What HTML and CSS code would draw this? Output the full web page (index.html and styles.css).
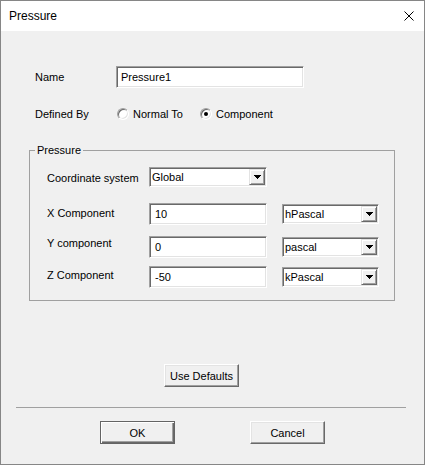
FILE: index.html
```html
<!DOCTYPE html>
<html lang="en">
<head>
<meta charset="utf-8">
<title>Pressure</title>
<link rel="stylesheet" href="styles.css">
</head>
<body>
<div class="window">
  <div class="titlebar">
    <span class="title">Pressure</span>
    <svg class="close" width="10" height="10" viewBox="0 0 10 10" aria-label="Close">
      <path d="M0.5 0.5 L9.5 9.5 M9.5 0.5 L0.5 9.5" stroke="#000" stroke-width="1" fill="none"/>
    </svg>
  </div>

  <div class="client">
    <div class="form-row name-row">
      <span class="label">Name</span>
      <div class="edit name-edit">Pressure1</div>
    </div>

    <div class="form-row defined-row">
      <span class="label">Defined By</span>
      <div class="radios">
        <span class="radio radio-normal"><span class="radio-box"></span>Normal To</span>
        <span class="radio radio-component"><span class="radio-box checked"></span>Component</span>
      </div>
    </div>

    <fieldset class="group">
      <legend>Pressure</legend>
      <div class="group-body">
        <div class="grow row-coord">
          <span class="label">Coordinate system</span>
          <div class="combo wide">
            <span class="combo-text">Global</span>
            <span class="combo-btn"><svg width="7" height="4" viewBox="0 0 7 4"><path d="M0 0h7v1h-1v1h-1v1h-1v1h-1v-1h-1v-1h-1v-1h-1z" fill="#000"/></svg></span>
          </div>
        </div>

        <div class="grow row-x">
          <span class="label">X Component</span>
          <div class="edit field">10</div>
          <div class="combo unit">
            <span class="combo-text">hPascal</span>
            <span class="combo-btn"><svg width="7" height="4" viewBox="0 0 7 4"><path d="M0 0h7v1h-1v1h-1v1h-1v1h-1v-1h-1v-1h-1v-1h-1z" fill="#000"/></svg></span>
          </div>
        </div>

        <div class="grow row-y">
          <span class="label">Y component</span>
          <div class="edit field">0</div>
          <div class="combo unit">
            <span class="combo-text">pascal</span>
            <span class="combo-btn"><svg width="7" height="4" viewBox="0 0 7 4"><path d="M0 0h7v1h-1v1h-1v1h-1v1h-1v-1h-1v-1h-1v-1h-1z" fill="#000"/></svg></span>
          </div>
        </div>

        <div class="grow row-z">
          <span class="label">Z Component</span>
          <div class="edit field">-50</div>
          <div class="combo unit">
            <span class="combo-text">kPascal</span>
            <span class="combo-btn"><svg width="7" height="4" viewBox="0 0 7 4"><path d="M0 0h7v1h-1v1h-1v1h-1v1h-1v-1h-1v-1h-1v-1h-1z" fill="#000"/></svg></span>
          </div>
        </div>
      </div>
    </fieldset>

    <div class="defaults-row">
      <button class="btn" type="button">Use Defaults</button>
    </div>

    <div class="separator"></div>

    <div class="actions">
      <button class="btn btn-default" type="button">OK</button>
      <button class="btn" type="button">Cancel</button>
    </div>
  </div>
</div>
</body>
</html>
```

FILE: styles.css
```css
* {
  box-sizing: border-box;
}

html,
body {
  margin: 0;
  padding: 0;
}

body {
  width: 425px;
  height: 465px;
  background: #f0f0f0;
  color: #000;
  font-family: "Liberation Sans", Arial, sans-serif;
  font-size: 11px;
}

/* dialog frame */
.window {
  width: 425px;
  height: 465px;
  border: 1px solid #868686;
  background: #f0f0f0;
  display: flex;
  flex-direction: column;
}

.titlebar {
  flex: none;
  height: 30px;
  background: #fff;
  display: flex;
  align-items: center;
  justify-content: space-between;
  padding: 0 10px 0 8px;
}

.title {
  font-size: 12px;
  line-height: 30px;
}

.close {
  display: block;
}

.client {
  flex: 1;
  padding-top: 35px;
}

/* top rows */
.form-row {
  display: flex;
  align-items: center;
  padding-left: 34px;
}

.form-row .label {
  flex: none;
  width: 81px;
  line-height: 14px;
}

.name-row {
  height: 22px;
}

.defined-row {
  height: 16px;
  margin-top: 18px;
}

/* sunken edit box */
.edit {
  height: 22px;
  background: #fff;
  border: 1px solid;
  border-color: #a0a0a0 #fff #fff #a0a0a0;
  box-shadow: inset 1px 1px #696969, inset -1px -1px #e3e3e3;
  line-height: 20px;
  padding: 0 4px;
  white-space: nowrap;
  overflow: hidden;
}

.name-edit {
  width: 188px;
}

.field {
  width: 118px;
  padding-left: 5px;
}

/* radio buttons */
.radios {
  display: flex;
  margin-left: 1px;
}

.radio {
  display: flex;
  align-items: center;
  gap: 4px;
  line-height: 14px;
  white-space: nowrap;
}

.radio-normal {
  width: 83px;
}

.radio-box {
  flex: none;
  position: relative;
  width: 12px;
  height: 12px;
  border-radius: 50%;
  background: #fff;
  border: 1px solid;
  border-color: #a0a0a0 #fff #fff #a0a0a0;
  box-shadow: inset 1px 1px #696969, inset -1px -1px #e3e3e3;
}

.radio-box.checked::after {
  content: "";
  position: absolute;
  left: 3px;
  top: 3px;
  width: 4px;
  height: 4px;
  border-radius: 50%;
  background: #000;
}

/* group box */
.group {
  margin: 21px 0 0 28px;
  padding: 0;
  width: 366px;
  min-width: 0;
  border: 1px solid #a0a0a0;
}

.group legend {
  margin-left: 5px;
  padding: 0 2px;
  line-height: 14px;
}

.group-body {
  padding: 10px 0 12px 17px;
}

.grow {
  display: flex;
  align-items: flex-start;
}

.grow .label {
  flex: none;
  width: 102px;
  line-height: 14px;
}

.row-coord .label {
  margin-top: 4px;
}

.row-x {
  margin-top: 16px;
}

.row-x .label {
  margin-top: 3px;
}

.row-y {
  margin-top: 11px;
}

.row-z {
  margin-top: 8px;
}

.row-z .label {
  margin-top: 2px;
}

/* drop-down list */
.combo {
  display: flex;
  height: 20px;
  background: #fff;
  border: 1px solid;
  border-color: #a0a0a0 #fff #fff #a0a0a0;
  box-shadow: inset 1px 1px #696969, inset -1px -1px #e3e3e3;
  padding: 1px;
}

.combo.wide {
  width: 118px;
}

.combo.unit {
  width: 97px;
  margin-left: 15px;
  align-self: center;
}

.combo-text {
  flex: 1;
  line-height: 16px;
  padding-left: 1px;
  white-space: nowrap;
  overflow: hidden;
}

.combo-btn {
  flex: none;
  width: 16px;
  height: 16px;
  background: #f0f0f0;
  border: 1px solid;
  border-color: #e3e3e3 #696969 #696969 #e3e3e3;
  box-shadow: inset 1px 1px #fff, inset -1px -1px #a0a0a0;
  display: flex;
  align-items: center;
  justify-content: center;
}

.combo-btn svg {
  display: block;
}

/* push buttons */
.btn {
  display: block;
  width: 75px;
  height: 23px;
  padding: 0;
  background: #f0f0f0;
  color: #000;
  font-family: "Liberation Sans", Arial, sans-serif;
  font-size: 11px;
  border: 1px solid;
  border-color: #fff #696969 #696969 #fff;
  box-shadow: inset -1px -1px #a0a0a0, inset 1px 1px #e3e3e3;
}

.btn-default {
  border-color: #646464;
  box-shadow: inset 1px 1px #fff, inset -1px -1px #696969, inset -2px -2px #a0a0a0;
}

.defaults-row {
  margin-top: 63px;
  padding-left: 163px;
}

.separator {
  margin: 20px 18px 0 15px;
  border-top: 1px solid #a0a0a0;
}

.actions {
  display: flex;
  gap: 75px;
  margin-top: 13px;
  padding-left: 99px;
}
```
